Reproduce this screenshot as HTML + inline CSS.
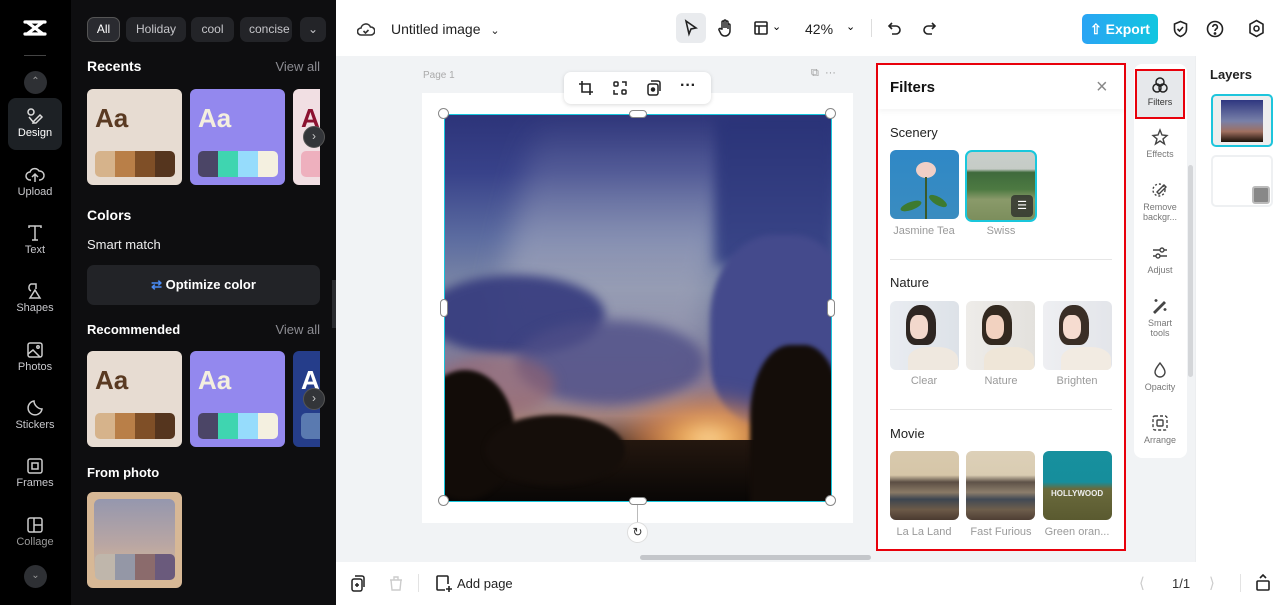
<!DOCTYPE html>
<html><head><meta charset="utf-8">
<style>
*{box-sizing:border-box;margin:0;padding:0}
body{width:1280px;height:605px;overflow:hidden;position:relative;font-family:"Liberation Sans",sans-serif;background:#fff}
.abs{position:absolute}
.rail{left:0;top:0;width:71px;height:605px;background:#000}
.nav{position:absolute;left:8px;width:54px;text-align:center;color:#c8c8cc;font-size:11px}
.nav svg{display:block;margin:0 auto 2px}
.panel{left:71px;top:0;width:265px;height:605px;background:#0e0e10;color:#fff}
.chip{position:absolute;top:17px;height:25px;border-radius:7px;background:#232428;color:#c6c6ca;font-size:12px;line-height:25px;text-align:center}
.h{position:absolute;font-weight:bold;font-size:14px;color:#fff}
.va{position:absolute;right:16px;font-size:13px;color:#8c8c92}
.card{position:absolute;width:95px;height:96px;border-radius:6px;overflow:hidden}
.card .aa{position:absolute;left:8px;top:14px;font-weight:bold;font-size:26px}
.pal{position:absolute;left:8px;top:62px;width:80px;height:26px;border-radius:5px;overflow:hidden;display:flex}
.pal i{flex:1}
.arr{position:absolute;width:22px;height:22px;border-radius:50%;background:#333539;border:1px solid #555;color:#ccc;font-size:12px;line-height:19px;text-align:center}
.top{left:336px;top:0;width:944px;height:56px;background:#fff}
.canvas{left:336px;top:56px;width:859px;height:506px;background:#f1f3f5}
.bottom{left:336px;top:562px;width:944px;height:43px;background:#fff}
.layers{left:1195px;top:56px;width:85px;height:506px;background:#fff;border-left:1px solid #eceef0}
.filt{left:876px;top:63px;width:250px;height:488px;background:#fff;border:2px solid #e8000b}
.ft{position:absolute;font-size:13px;color:#222}
.th{position:absolute;width:69px;height:69px;border-radius:6px;overflow:hidden}
.lbl{position:absolute;width:76px;text-align:center;font-size:11px;color:#9a9a9a}
.tool{position:absolute;left:0;width:52px;text-align:center;font-size:9px;color:#777;line-height:10px}
.tool svg{display:block;margin:0 auto 3px}
.h1{position:absolute;width:11px;height:11px;border-radius:50%;background:#fff;border:1px solid #888}
.b{position:absolute;border-radius:50%}
</style></head><body>

<div class="abs rail">
  <svg class="abs" style="left:22px;top:18px" width="26" height="20" viewBox="0 0 26 20"><path d="M3 4h20M3 16h20M5 4l16 12M21 4L5 16" fill="none" stroke="#fff" stroke-width="3.2" stroke-linecap="round"/></svg>
  <div class="abs" style="left:24px;top:55px;width:22px;height:1px;background:#444"></div>
  <div class="abs" style="left:24px;top:71px;width:23px;height:23px;border-radius:50%;background:#2e3034;color:#999;font-size:10px;text-align:center;line-height:22px">&#8963;</div>
  <div class="abs" style="left:8px;top:98px;width:54px;height:52px;border-radius:8px;background:#1d2125"></div>
  <div class="nav" style="top:107px;color:#fff"><svg width="18" height="18" viewBox="0 0 18 18" fill="none" stroke="#ddd" stroke-width="1.5"><circle cx="5" cy="5" r="3"/><path d="M8 14l6-6 2 2-6 6-3 0z"/><path d="M3 10l5 6"/></svg>Design</div>
  <div class="nav" style="top:166px"><svg width="20" height="18" viewBox="0 0 20 18" fill="none" stroke="#ccc" stroke-width="1.5"><path d="M6 14H5a4 4 0 010-8 5 5 0 019-1 4 4 0 011 9h-1"/><path d="M10 16V8M7 11l3-3 3 3"/></svg>Upload</div>
  <div class="nav" style="top:224px"><svg width="18" height="18" viewBox="0 0 18 18" fill="none" stroke="#ccc" stroke-width="1.5"><path d="M3 4V2h12v2M9 2v14M6 16h6"/></svg>Text</div>
  <div class="nav" style="top:282px"><svg width="18" height="18" viewBox="0 0 18 18" fill="none" stroke="#ccc" stroke-width="1.5"><path d="M5 9a4 4 0 010-7h5v5"/><path d="M4 16l5-8 5 8z"/></svg>Shapes</div>
  <div class="nav" style="top:341px"><svg width="18" height="18" viewBox="0 0 18 18" fill="none" stroke="#ccc" stroke-width="1.5"><rect x="2" y="2" width="14" height="14" rx="2"/><path d="M2 13l5-4 7 7"/><circle cx="12" cy="6" r="1.2"/></svg>Photos</div>
  <div class="nav" style="top:399px"><svg width="18" height="18" viewBox="0 0 18 18" fill="none" stroke="#ccc" stroke-width="1.5"><path d="M16 10a7 7 0 11-8-8c0 4 4 8 8 8z"/></svg>Stickers</div>
  <div class="nav" style="top:457px"><svg width="18" height="18" viewBox="0 0 18 18" fill="none" stroke="#ccc" stroke-width="1.5"><rect x="2" y="2" width="14" height="14" rx="2"/><rect x="6" y="6" width="6" height="6"/></svg>Frames</div>
  <div class="nav" style="top:516px;color:#999"><svg width="18" height="18" viewBox="0 0 18 18" fill="none" stroke="#ccc" stroke-width="1.5"><rect x="2" y="2" width="14" height="14" rx="2"/><path d="M8 2v14M8 9h8"/></svg>Collage</div>
  <div class="abs" style="left:24px;top:565px;width:23px;height:23px;border-radius:50%;background:#2e3034;color:#999;font-size:10px;text-align:center;line-height:22px">&#8964;</div>
</div>

<div class="abs panel">
  <div class="chip" style="left:16px;width:33px;background:#2a2b30;border:1px solid #555;color:#fff;line-height:23px">All</div>
  <div class="chip" style="left:55px;width:60px">Holiday</div>
  <div class="chip" style="left:120px;width:43px">cool</div>
  <div class="chip" style="left:169px;width:52px;overflow:hidden;text-align:left;padding-left:9px">concise</div>
  <div class="chip" style="left:229px;width:26px">&#8964;</div>
  <div class="h" style="left:16px;top:58px">Recents</div><div class="va" style="top:59px">View all</div>
  <div class="card" style="left:16px;top:89px;background:#e7dcd2"><div class="aa" style="color:#5a3a22">Aa</div><div class="pal"><i style="background:#d6b38b"></i><i style="background:#b97f48"></i><i style="background:#7f4f27"></i><i style="background:#55351e"></i></div></div>
  <div class="card" style="left:119px;top:89px;background:#9388ee"><div class="aa" style="color:#f4efdf">Aa</div><div class="pal"><i style="background:#4b4566"></i><i style="background:#3fd5b0"></i><i style="background:#96dcfc"></i><i style="background:#f4f0e0"></i></div></div>
  <div class="card" style="left:222px;top:89px;width:27px;background:#f1dfe3;border-radius:6px 0 0 6px"><div class="aa" style="color:#8b1230">A</div><div class="pal" style="background:#eeb0be"></div></div>
  <div class="arr" style="left:232px;top:126px">&#8250;</div>
  <div class="h" style="left:16px;top:207px">Colors</div>
  <div class="abs" style="left:16px;top:237px;font-size:13px;color:#eee">Smart match</div>
  <div class="abs" style="left:16px;top:265px;width:233px;height:40px;border-radius:7px;background:#222327;text-align:center;line-height:40px;font-size:13px;font-weight:bold"><span style="color:#4a8cf5">&#8644;</span> Optimize color</div>
  <div class="h" style="left:16px;top:322px;font-size:13px">Recommended</div><div class="va" style="top:322px">View all</div>
  <div class="card" style="left:16px;top:351px;background:#e7dcd2"><div class="aa" style="color:#5a3a22">Aa</div><div class="pal"><i style="background:#d6b38b"></i><i style="background:#b97f48"></i><i style="background:#7f4f27"></i><i style="background:#55351e"></i></div></div>
  <div class="card" style="left:119px;top:351px;background:#9388ee"><div class="aa" style="color:#f4efdf">Aa</div><div class="pal"><i style="background:#4b4566"></i><i style="background:#3fd5b0"></i><i style="background:#96dcfc"></i><i style="background:#f4f0e0"></i></div></div>
  <div class="card" style="left:222px;top:351px;width:27px;background:#253d8a;border-radius:6px 0 0 6px"><div class="aa" style="color:#fff">A</div><div class="pal" style="background:#5a7ab0"></div></div>
  <div class="arr" style="left:232px;top:388px">&#8250;</div>
  <div class="h" style="left:16px;top:465px;font-size:13px">From photo</div>
  <div class="card" style="left:16px;top:492px;background:#d7b896"><div class="abs" style="left:7px;top:7px;width:81px;height:76px;border-radius:6px;background:linear-gradient(#9597ae,#b9a6a3 60%,#d5b797)"></div><div class="pal"><i style="background:#bfb6ab"></i><i style="background:#9497a6"></i><i style="background:#8b6b6c"></i><i style="background:#6a5a7c"></i></div></div>
</div>
<div class="abs" style="left:332px;top:280px;width:9px;height:48px;background:#2a2b2f;border-radius:0 5px 5px 0"></div>

<div class="abs top">
  <svg class="abs" style="left:21px;top:20px" width="18" height="18" viewBox="0 0 18 18" fill="none" stroke="#333" stroke-width="1.6"><path d="M5 15H4a3.5 3.5 0 010-7 5 5 0 019.5-1A3.5 3.5 0 0114 15z"/><path d="M6.5 11l2 2 3-3"/></svg>
  <div class="abs" style="left:55px;top:21px;font-size:14px;color:#222">Untitled image <span style="font-size:11px;margin-left:6px">&#8964;</span></div>
  <div class="abs" style="left:340px;top:13px;width:30px;height:30px;border-radius:6px;background:#e9ebee"></div>
  <svg class="abs" style="left:347px;top:19px" width="16" height="18" viewBox="0 0 16 18" fill="none" stroke="#222" stroke-width="1.6"><path d="M3 2l10 7-5 1-2 5z"/></svg>
  <svg class="abs" style="left:381px;top:19px" width="16" height="18" viewBox="0 0 16 18" fill="none" stroke="#222" stroke-width="1.5"><path d="M5 10V3a1 1 0 012 0v6V2a1 1 0 012 0v7V3a1 1 0 012 0v7-4a1 1 0 012 0v6a5 5 0 01-5 5H8a5 5 0 01-4-2L2 11a1 1 0 012-1z"/></svg>
  <svg class="abs" style="left:417px;top:20px" width="16" height="16" viewBox="0 0 16 16" fill="none" stroke="#222" stroke-width="1.6"><rect x="2" y="2" width="12" height="12" rx="1"/><path d="M2 6h12M6 6v8"/></svg>
  <div class="abs" style="left:436px;top:20px;font-size:11px">&#8964;</div>
  <div class="abs" style="left:469px;top:21px;font-size:14px;color:#222">42%</div>
  <div class="abs" style="left:510px;top:20px;font-size:11px">&#8964;</div>
  <div class="abs" style="left:535px;top:19px;width:1px;height:18px;background:#ddd"></div>
  <svg class="abs" style="left:551px;top:20px" width="16" height="16" viewBox="0 0 16 16" fill="none" stroke="#222" stroke-width="1.6"><path d="M5 3L2 6l3 3"/><path d="M2 6h7a4 4 0 010 8H5"/></svg>
  <svg class="abs" style="left:585px;top:20px" width="16" height="16" viewBox="0 0 16 16" fill="none" stroke="#222" stroke-width="1.6"><path d="M11 3l3 3-3 3"/><path d="M14 6H7a4 4 0 000 8h4"/></svg>
  <div class="abs" style="left:746px;top:14px;width:76px;height:30px;border-radius:5px;background:linear-gradient(90deg,#2aa4f4,#11c6e0);color:#fff;font-weight:bold;font-size:14px;line-height:30px;text-align:center">&#8679; Export</div>
  <svg class="abs" style="left:836px;top:20px" width="17" height="18" viewBox="0 0 17 18" fill="none" stroke="#222" stroke-width="1.6"><path d="M8.5 1.5l6 2.5v5c0 4-3 6.5-6 7.5-3-1-6-3.5-6-7.5V4z"/><path d="M5.5 9l2 2 3.5-4"/></svg>
  <svg class="abs" style="left:870px;top:20px" width="18" height="18" viewBox="0 0 18 18" fill="none" stroke="#222" stroke-width="1.6"><circle cx="9" cy="9" r="7.5"/><path d="M6.8 7a2.3 2.3 0 114 1.5c-1 .7-1.8 1.2-1.8 2.5"/><circle cx="9" cy="13.5" r=".6" fill="#222"/></svg>
  <svg class="abs" style="left:912px;top:19px" width="17" height="19" viewBox="0 0 17 19" fill="none" stroke="#222" stroke-width="1.6"><path d="M8.5 1.5l6.5 3.7v8.6l-6.5 3.7L2 13.8V5.2z"/><circle cx="8.5" cy="9.5" r="2.5"/></svg>
</div>

<div class="abs canvas"></div>
<div class="abs" style="left:423px;top:70px;font-size:10px;color:#aaa">Page 1</div>
<div class="abs" style="left:811px;top:67px;font-size:11px;color:#999">&#10697; &nbsp;&middot;&middot;&middot;</div>
<div class="abs" style="left:422px;top:93px;width:431px;height:430px;background:#fff"></div>
<div class="abs" style="left:564px;top:72px;width:147px;height:32px;border-radius:7px;background:#fff;box-shadow:0 1px 4px rgba(0,0,0,.15)">
  <svg class="abs" style="left:14px;top:8px" width="16" height="16" viewBox="0 0 16 16" fill="none" stroke="#222" stroke-width="1.6"><path d="M4 1v11h11M1 4h11v11"/></svg>
  <svg class="abs" style="left:48px;top:8px" width="16" height="16" viewBox="0 0 16 16" fill="none" stroke="#222" stroke-width="1.5"><rect x="2" y="2" width="4" height="4" rx="1"/><rect x="10" y="10" width="4" height="4" rx="1"/><path d="M10 2h4v4M2 10v4h4"/></svg>
  <svg class="abs" style="left:82px;top:8px" width="16" height="16" viewBox="0 0 16 16" fill="none" stroke="#222" stroke-width="1.5"><rect x="2" y="4" width="10" height="11" rx="2"/><path d="M5 1h7a2 2 0 012 2v8"/><circle cx="7" cy="9.5" r="1.5" fill="#222"/></svg>
  <div class="abs" style="left:116px;top:5px;font-size:16px;font-weight:bold;color:#222">&middot;&middot;&middot;</div>
</div>

<!-- sunset image -->
<div class="abs" style="left:444px;top:114px;width:388px;height:388px;border:1.5px solid #16c6dc;overflow:hidden">
  <div class="abs" style="inset:0;background:linear-gradient(180deg,#2d3479 0%,#38428a 15%,#5c6ca0 32%,#7d88a6 45%,#7b7e9e 58%,#8a7890 70%,#a27a70 78%,#3a2a22 86%,#0f0b09 100%)"></div>
  <div class="abs" style="left:60px;top:0;width:210px;height:300px;filter:blur(14px);background:linear-gradient(180deg,rgba(180,185,205,0) 0%,rgba(175,178,195,.55) 45%,rgba(170,165,180,.35) 100%);transform:skewX(-12deg)"></div>
  <div class="abs" style="left:270px;top:0;width:120px;height:150px;filter:blur(6px);background:linear-gradient(#2a3378,#3a4688)"></div>
  <div class="b" style="left:265px;top:120px;width:140px;height:190px;border-radius:45% 40% 20% 35%;filter:blur(3px);background:#444a8c"></div>
  <div class="b" style="left:-20px;top:160px;width:180px;height:80px;filter:blur(5px);background:rgba(52,58,125,.9)"></div>
  <div class="b" style="left:70px;top:205px;width:190px;height:85px;filter:blur(6px);background:rgba(78,78,135,.8)"></div>
  <div class="b" style="left:-10px;top:240px;width:120px;height:60px;filter:blur(6px);background:rgba(150,100,110,.6)"></div>
  <div class="b" style="left:170px;top:280px;width:170px;height:80px;filter:blur(10px);background:radial-gradient(ellipse at 55% 55%,#fff4d0 0%,#f7b660 18%,rgba(220,130,70,.7) 45%,rgba(0,0,0,0) 75%)"></div>
  <div class="abs" style="left:0;top:325px;width:388px;height:63px;background:linear-gradient(#24170f,#080605)"></div>
  <div class="b" style="left:-30px;top:255px;width:100px;height:130px;filter:blur(2px);background:#120c08"></div>
  <div class="b" style="left:40px;top:300px;width:140px;height:70px;filter:blur(2px);background:#150e0a"></div>
  <div class="abs" style="left:305px;top:230px;width:90px;height:160px;border-radius:45% 40% 0 0;filter:blur(2px);background:#140d09"></div>
</div>
<div class="h1" style="left:438px;top:108px"></div><div class="h1" style="left:825px;top:108px"></div>
<div class="h1" style="left:438px;top:495px"></div><div class="h1" style="left:825px;top:495px"></div>
<div class="abs" style="left:629px;top:110px;width:18px;height:8px;border-radius:4px;background:#fff;border:1px solid #888"></div>
<div class="abs" style="left:629px;top:497px;width:18px;height:8px;border-radius:4px;background:#fff;border:1px solid #888"></div>
<div class="abs" style="left:440px;top:299px;width:8px;height:18px;border-radius:4px;background:#fff;border:1px solid #888"></div>
<div class="abs" style="left:827px;top:299px;width:8px;height:18px;border-radius:4px;background:#fff;border:1px solid #888"></div>
<div class="abs" style="left:637px;top:505px;width:1px;height:18px;background:#bbb"></div>
<div class="abs" style="left:627px;top:522px;width:21px;height:21px;border-radius:50%;background:#fff;border:1px solid #ddd;font-size:12px;text-align:center;line-height:19px;color:#333">&#8635;</div>
<div class="abs" style="left:640px;top:555px;width:231px;height:5px;border-radius:3px;background:#c4c6ca"></div>

<div class="abs filt">
  <div class="abs" style="left:0;top:0;width:246px;height:44px;background:#fff;box-shadow:0 3px 5px rgba(0,0,0,.04)"></div>
  <div class="abs" style="left:12px;top:14px;font-size:15px;font-weight:bold;color:#111">Filters</div>
  <div class="abs" style="left:218px;top:11px;font-size:20px;color:#888">&#215;</div>
  <div class="ft" style="left:12px;top:60px">Scenery</div>
  <div class="th" style="left:12px;top:85px;background:linear-gradient(#2f88c6,#3a8cc0)"><div class="abs" style="left:26px;top:12px;width:20px;height:16px;border-radius:50%;background:#f0cfc6"></div><div class="abs" style="left:35px;top:27px;width:2px;height:42px;background:#3a5a2a"></div><div class="abs" style="left:10px;top:52px;width:22px;height:8px;border-radius:50%;background:#3d7a30;transform:rotate(-20deg)"></div><div class="abs" style="left:38px;top:47px;width:20px;height:8px;border-radius:50%;background:#3d7a30;transform:rotate(30deg)"></div></div>
  <div class="lbl" style="left:8px;top:160px">Jasmine Tea</div>
  <div class="th" style="left:87px;top:85px;width:72px;height:72px;border:2px solid #19c7dc;border-radius:7px;background:linear-gradient(#c9cfcb 0%,#c5cbc6 25%,#3f6a3c 30%,#4d7a42 55%,#8a9a6a 70%,#7c8e5c 100%)"><div class="abs" style="left:44px;top:43px;width:22px;height:22px;border-radius:4px;background:rgba(40,40,40,.75);color:#fff;font-size:11px;text-align:center;line-height:22px">&#9776;</div></div>
  <div class="lbl" style="left:85px;top:160px">Swiss</div>
  <div class="abs" style="left:12px;top:194px;width:222px;height:1px;background:#e6e6e6"></div>
  <div class="ft" style="left:12px;top:210px">Nature</div>
  <div class="th" style="left:12px;top:236px;background:linear-gradient(90deg,#e9ecf1,#dde2e8)"><div class="abs" style="left:16px;top:4px;width:30px;height:40px;border-radius:45% 45% 30% 30%;background:#2e2622"></div><div class="abs" style="left:20px;top:14px;width:18px;height:24px;border-radius:40%;background:#f2d8cc"></div><div class="abs" style="left:18px;top:46px;width:50px;height:30px;border-radius:40% 40% 0 0;background:#efe8df"></div></div>
  <div class="lbl" style="left:8px;top:310px">Clear</div>
  <div class="th" style="left:88px;top:236px;background:linear-gradient(90deg,#eeece9,#e3e1dd)"><div class="abs" style="left:16px;top:4px;width:30px;height:40px;border-radius:45% 45% 30% 30%;background:#33291f"></div><div class="abs" style="left:20px;top:14px;width:18px;height:24px;border-radius:40%;background:#f2d2c0"></div><div class="abs" style="left:18px;top:46px;width:50px;height:30px;border-radius:40% 40% 0 0;background:#efe6d8"></div></div>
  <div class="lbl" style="left:85px;top:310px">Nature</div>
  <div class="th" style="left:165px;top:236px;background:linear-gradient(90deg,#eeeff2,#e3e5ea)"><div class="abs" style="left:16px;top:4px;width:30px;height:40px;border-radius:45% 45% 30% 30%;background:#3a2e26"></div><div class="abs" style="left:20px;top:14px;width:18px;height:24px;border-radius:40%;background:#f6dcd0"></div><div class="abs" style="left:18px;top:46px;width:50px;height:30px;border-radius:40% 40% 0 0;background:#f2ebe2"></div></div>
  <div class="lbl" style="left:161px;top:310px">Brighten</div>
  <div class="abs" style="left:12px;top:344px;width:222px;height:1px;background:#e6e6e6"></div>
  <div class="ft" style="left:12px;top:361px">Movie</div>
  <div class="th" style="left:12px;top:386px;background:linear-gradient(#d8c9ad 0%,#d6c6a8 35%,#5b4e44 45%,#8a7a66 60%,#3d4550 70%,#6c5a48 85%,#4a3a30 100%)"></div>
  <div class="lbl" style="left:8px;top:461px">La La Land</div>
  <div class="th" style="left:88px;top:386px;background:linear-gradient(#ddd0b8 0%,#d9ccb2 35%,#5e5248 45%,#8c7e6c 60%,#424a55 70%,#6e5e4c 85%,#4e3e34 100%)"></div>
  <div class="lbl" style="left:85px;top:461px">Fast Furious</div>
  <div class="th" style="left:165px;top:386px;background:linear-gradient(#17909e 0%,#168e9c 45%,#6a6a3c 55%,#5a5a30 100%)"><div class="abs" style="left:8px;top:38px;font-size:8px;color:#eee;font-weight:bold">HOLLYWOOD</div></div>
  <div class="lbl" style="left:161px;top:461px">Green oran...</div>
</div>

<div class="abs" style="left:1134px;top:64px;width:53px;height:394px;background:#fff;border-radius:8px">
  <div class="abs" style="left:1px;top:5px;width:50px;height:50px;background:#e6e8eb;border:2px solid #e8000b"></div>
  <div class="tool" style="top:12px;color:#333"><svg width="18" height="18" viewBox="0 0 18 18" fill="none" stroke="#222" stroke-width="1.5"><circle cx="9" cy="6" r="4"/><circle cx="6" cy="12" r="4"/><circle cx="12" cy="12" r="4"/></svg>Filters</div>
  <div class="tool" style="top:64px"><svg width="18" height="18" viewBox="0 0 18 18" fill="none" stroke="#444" stroke-width="1.4"><path d="M9 2l2 5 5 .5-4 3.5 1.5 5L9 13l-4.5 3L6 11 2 7.5 7 7z"/></svg>Effects</div>
  <div class="tool" style="top:117px"><svg width="18" height="18" viewBox="0 0 18 18" fill="none" stroke="#444" stroke-width="1.4"><circle cx="8" cy="9" r="6" stroke-dasharray="2 2"/><path d="M8 13l7-7-2-2-7 7z"/></svg>Remove<br>backgr...</div>
  <div class="tool" style="top:180px"><svg width="18" height="18" viewBox="0 0 18 18" fill="none" stroke="#444" stroke-width="1.4"><path d="M2 6h14M2 12h14"/><circle cx="11" cy="6" r="2" fill="#fff"/><circle cx="7" cy="12" r="2" fill="#fff"/></svg>Adjust</div>
  <div class="tool" style="top:233px"><svg width="18" height="18" viewBox="0 0 18 18" fill="none" stroke="#444" stroke-width="1.4"><path d="M3 15L13 5l1 1L4 16z"/><path d="M5 2v3M3.5 3.5h3M14 11v3M12.5 12.5h3"/></svg>Smart<br>tools</div>
  <div class="tool" style="top:297px"><svg width="18" height="18" viewBox="0 0 18 18" fill="none" stroke="#444" stroke-width="1.4"><path d="M9 2c3 4 5 6.5 5 9a5 5 0 01-10 0c0-2.5 2-5 5-9z"/></svg>Opacity</div>
  <div class="tool" style="top:350px"><svg width="18" height="18" viewBox="0 0 18 18" fill="none" stroke="#444" stroke-width="1.4"><rect x="2" y="2" width="14" height="14" rx="2" stroke-dasharray="3 2"/><rect x="6" y="6" width="6" height="6" rx="1"/></svg>Arrange</div>
</div>
<div class="abs" style="left:1188px;top:165px;width:5px;height:212px;border-radius:3px;background:#d4d6d9"></div>

<div class="abs layers">
  <div class="abs" style="left:14px;top:11px;font-size:13px;font-weight:bold;color:#222">Layers</div>
  <div class="abs" style="left:15px;top:38px;width:62px;height:53px;border:2px solid #1ec5dc;border-radius:5px;background:#eee"><div class="abs" style="left:8px;top:4px;width:42px;height:42px;background:linear-gradient(#2f3780,#7880a8 50%,#a07060 75%,#1a1008)"></div></div>
  <div class="abs" style="left:15px;top:99px;width:62px;height:52px;border:2px solid #eef0f2;border-radius:5px;background:#fff"><div class="abs" style="left:39px;top:29px;width:18px;height:18px;border-radius:3px;background:#888;border:2px solid #bbb"></div></div>
</div>

<div class="abs bottom">
  <svg class="abs" style="left:14px;top:13px" width="16" height="18" viewBox="0 0 16 18" fill="none" stroke="#222" stroke-width="1.5"><rect x="2" y="4" width="10" height="12" rx="2"/><path d="M5 1h7a2 2 0 012 2v9"/><path d="M7 8v4M5 10h4"/></svg>
  <svg class="abs" style="left:53px;top:13px" width="14" height="17" viewBox="0 0 14 17" fill="none" stroke="#ccc" stroke-width="1.4"><path d="M2 5h10l-1 10H3zM5 5V2h4v3M1 5h12"/></svg>
  <div class="abs" style="left:82px;top:12px;width:1px;height:18px;background:#e3e3e3"></div>
  <svg class="abs" style="left:99px;top:12px" width="18" height="19" viewBox="0 0 18 19" fill="none" stroke="#222" stroke-width="1.6"><path d="M10 16H3a1 1 0 01-1-1V3a1 1 0 011-1h9a1 1 0 011 1v7"/><path d="M14 12v6M11 15h6"/></svg>
  <div class="abs" style="left:121px;top:14px;font-size:13px;color:#222">Add page</div>
  <div class="abs" style="left:803px;top:12px;font-size:15px;color:#ccc">&#10216;</div>
  <div class="abs" style="left:836px;top:14px;font-size:13px;color:#333">1/1</div>
  <div class="abs" style="left:873px;top:12px;font-size:15px;color:#ccc">&#10217;</div>
  <div class="abs" style="left:904px;top:12px;width:1px;height:18px;background:#e3e3e3"></div>
  <svg class="abs" style="left:919px;top:12px" width="16" height="18" viewBox="0 0 16 18" fill="none" stroke="#222" stroke-width="1.6"><rect x="2" y="7" width="12" height="9" rx="1"/><path d="M5 4l3-3 3 3"/></svg>
</div>
</body></html>
